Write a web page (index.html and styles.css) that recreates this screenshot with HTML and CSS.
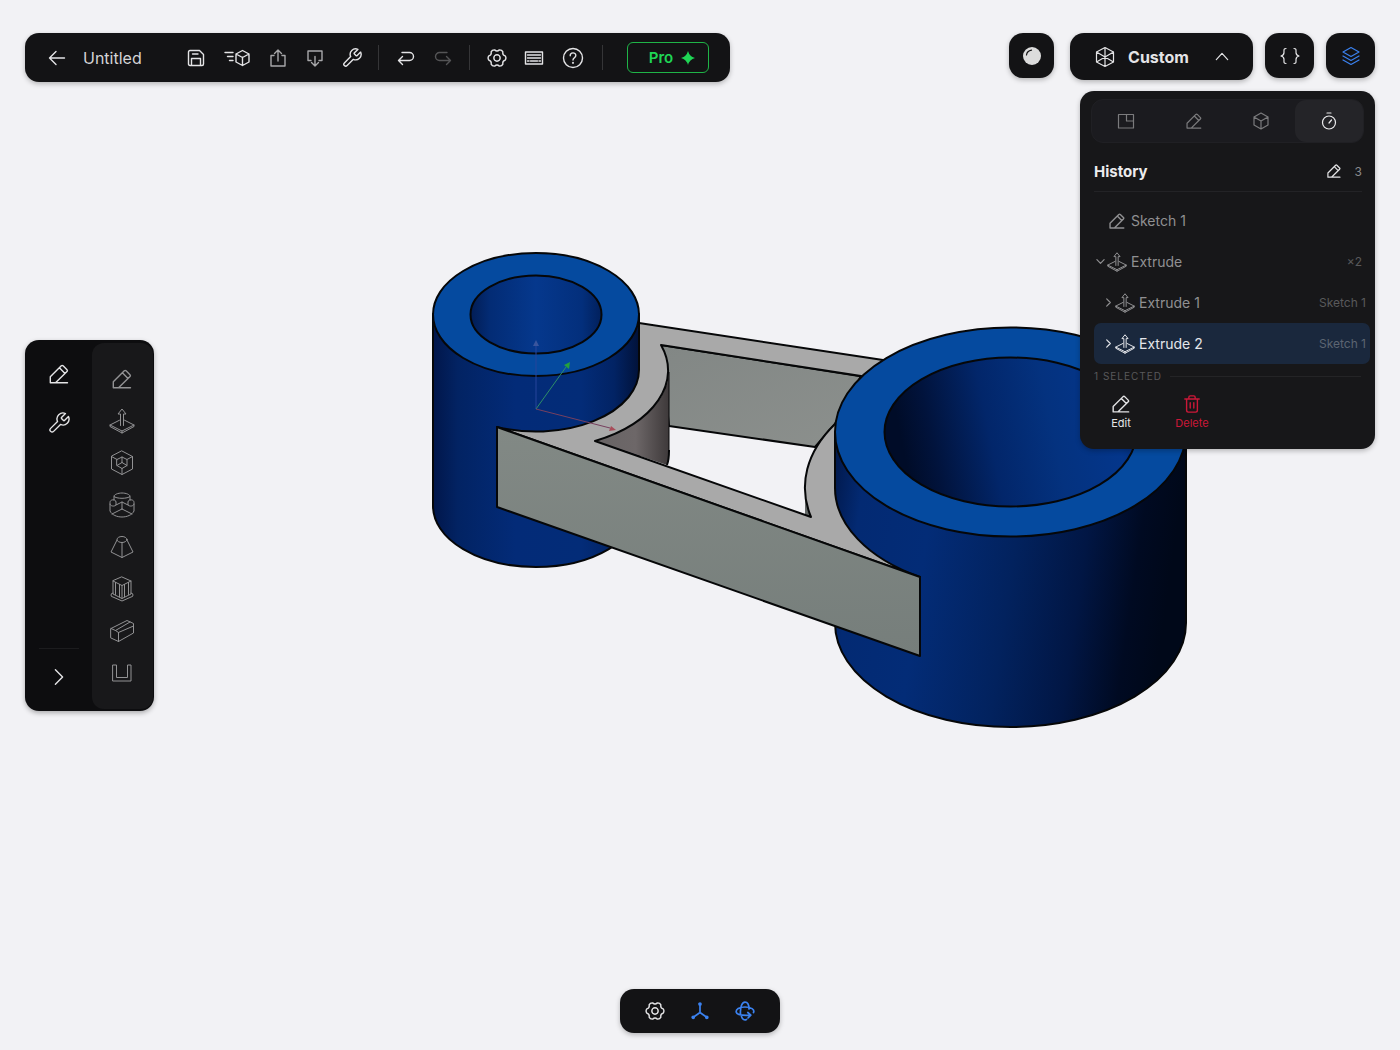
FILE: index.html
```html
<!DOCTYPE html>
<html lang="en">
<head>
<meta charset="utf-8">
<meta name="viewport" content="width=device-width, initial-scale=1">
<title>Untitled</title>
<link rel="stylesheet" href="styles.css">
</head>
<body>
<svg class="sprite" aria-hidden="true">
  <symbol id="i-back" viewBox="0 0 18 16"><path d="M16.500 8H1.500M8 1.500 1.500 8 8 14.500"/></symbol>
  <symbol id="i-save" viewBox="0 0 18 18"><path d="M1.500 3Q1.500 1.500 3 1.500H12.500L16.500 5.500V15Q16.500 16.500 15 16.500H3Q1.500 16.500 1.500 15ZM4.500 16V9.500H13.500V16M5.500 5H11"/></symbol>
  <symbol id="i-fast" viewBox="0 0 26 18"><path d="M18.500 1.500 25 5V13L18.500 16.500 12 13V5ZM12 5 18.500 8.500 25 5M18.500 8.500V16.500M1 3.500H9M3.500 7.500H9M5.500 11.500H9"/></symbol>
  <symbol id="i-share" viewBox="0 0 18 20"><path d="M5 7.500H2V18H16V7.500H13M9 13V2M5.500 5.500 9 2 12.500 5.500"/></symbol>
  <symbol id="i-import" viewBox="0 0 18 20"><path d="M5 12.500H2V3H16V12.500H13M9 8.500V18M5.500 14.500 9 18 12.500 14.500"/></symbol>
  <symbol id="i-wrench" viewBox="1 1 22 22"><path d="M14.700 6.300a1 1 0 0 0 0 1.400l1.600 1.600a1 1 0 0 0 1.400 0l3.770-3.770a6 6 0 0 1-7.940 7.940l-6.910 6.910a2.120 2.120 0 0 1-3-3l6.910-6.910a6 6 0 0 1 7.940-7.940l-3.760 3.760z"/></symbol>
  <symbol id="i-undo" viewBox="0 0 18 16"><path d="M5 2.500H12.500A4 4 0 0 1 12.500 10.500H1.500M5.500 6.500 1.500 10.500 5.500 14.500"/></symbol>
  <symbol id="i-redo" viewBox="0 0 18 16"><path d="M13 2.500H5.500A4 4 0 0 0 5.500 10.500H16.500M12.500 6.500 16.500 10.500 12.500 14.500"/></symbol>
  <symbol id="i-gear" viewBox="-11 -11 22 22"><path d="M9.020-2.250Q10.600 0 9.020 2.250Q5.720 3.300 6.460 6.690Q5.300 9.180 2.560 8.940Q0 6.600-2.560 8.940Q-5.300 9.180-6.460 6.690Q-5.720 3.300-9.020 2.250Q-10.600 0-9.020-2.250Q-5.720-3.300-6.460-6.690Q-5.300-9.180-2.560-8.940Q0-6.600 2.560-8.940Q5.300-9.180 6.460-6.690Q5.720-3.300 9.020-2.250Z"/><circle r="3.500"/></symbol>
  <symbol id="i-keyboard" viewBox="0 0 20 16"><path d="M1.500 2H18.500V14H1.500ZM3.500 5H16.500M3.500 8H16.500M3.500 11H5M6.500 11H13.500M15 11H16.500"/></symbol>
  <symbol id="i-help" viewBox="0 0 22 22"><circle cx="11" cy="11" r="9.500"/><path d="M8.200 8.700C8.200 5 13.800 5 13.800 8.500C13.800 10.800 11 10.600 11 13"/><circle cx="11" cy="15.800" r=".4"/></symbol>
  <symbol id="i-spark" viewBox="0 0 14 14"><path d="M7 0Q8.500 5.500 14 7Q8.500 8.500 7 14Q5.500 8.500 0 7Q5.500 5.500 7 0Z"/></symbol>
  <symbol id="i-ball" viewBox="0 0 20 20"><circle cx="10" cy="10" r="9" fill="#dcdcdc" stroke="none"/><path d="M4.500 9Q5 5 9.500 4.200" stroke="#151517"/></symbol>
  <symbol id="i-hex" viewBox="0 0 20 22"><path d="M10 1.500 18.500 6V16L10 20.500 1.500 16V6ZM10 1.500V20.500M1.500 6 18.500 16M18.500 6 1.500 16"/></symbol>
  <symbol id="i-up" viewBox="0 0 16 10"><path d="M1.500 8.500 8 1.500 14.500 8.500"/></symbol>
  <symbol id="i-braces" viewBox="0 0 20 18"><path d="M6 1.500C3.500 1.500 4 3 4 5.500S3 8.500 1 9C3 9.500 4 10 4 12.500S3.500 16.500 6 16.500M14 1.500C16.500 1.500 16 3 16 5.500S17 8.500 19 9C17 9.500 16 10 16 12.500S16.500 16.500 14 16.500"/></symbol>
  <symbol id="i-layers" viewBox="0 0 18 20"><path d="M9 1.500 17 6 9 10.500 1 6ZM1 10 9 14.500 17 10M1 14 9 18.500 17 14"/></symbol>
  <symbol id="i-board" viewBox="0 0 18 18"><path d="M1.500 2.500H16.500V16H1.500ZM9.500 2.500V9H16.500"/></symbol>
  <symbol id="i-pencil" viewBox="0 0 20 20"><path d="M18.500 18.800H1.300V12.800L12.300 1.800Q13.200 1 14.100 1.800L18 5.700Q18.900 6.600 18 7.500L6.800 18.600M10.400 3.800 16 9.400"/></symbol>
  <symbol id="i-cube" viewBox="0 0 16 18"><path d="M8 1 15 5V13L8 17 1 13V5ZM1 5 8 9 15 5M8 9V17"/></symbol>
  <symbol id="i-timer" viewBox="0 0 16 18"><circle cx="8" cy="10.500" r="6.500"/><path d="M8 11 10.500 8M6 1H10"/></symbol>
  <symbol id="i-down" viewBox="0 0 10 6"><path d="M1 1 5 5 9 1"/></symbol>
  <symbol id="i-right" viewBox="0 0 6 10"><path d="M1 1 5 5 1 9"/></symbol>
  <symbol id="i-trash" viewBox="0 0 18 20"><path d="M1 4.500H17M3 4.500V17Q3 19 5 19H13Q15 19 15 17V4.500M5.500 4.500V2.500Q5.500 1 7 1H11Q12.500 1 12.500 2.500V4.500M7 8.500V14.500M11 8.500V14.500"/></symbol>
  <symbol id="i-extrude" viewBox="0 0 26 26"><path d="M10.500 12.200 1 17V18.500L13 25 25 18.500V17L15.500 12.200M1 17 13 23 25 17M13 23V25M11.500 17.500V6H9L13 1 17 6H14.500V17.500"/></symbol>
  <symbol id="i-shell" viewBox="0 0 24 26"><path d="M12 1 22.500 6.500V19L12 24.500 1.500 19V6.500ZM1.500 6.500 7 9.500M22.500 6.500 17 9.500M12 24.500V18.500M7 9.500 12 7 17 9.500V15.500L12 18.500 7 15.500ZM12 7V12.500M12 12.500 7 15.500M12 12.500 17 15.500"/></symbol>
  <symbol id="i-sweep" viewBox="0 0 26 26"><path d="M5 8V4.500C5 2.500 9 1 13 1S21 2.500 21 4.500V8M5 4.500C7 7 19 7 21 4.500M1 10C1 7 7 7 7 10V13C5 15 1 14 1 12ZM25 10C25 7 19 7 19 10V13C21 15 25 14 25 12ZM1 12V19C3 23 8 25 13 25S23 23 25 19V12M7 13 13 10 19 13M13 10V17M13 17 3 22M13 17 23 22"/></symbol>
  <symbol id="i-loft" viewBox="0 0 24 24"><ellipse cx="12" cy="4.500" rx="5" ry="3"/><path d="M7 5 1 17 12 22.500 23 17 17 5M12 7.500V22.500"/></symbol>
  <symbol id="i-base" viewBox="0 0 24 26"><path d="M12 1 21 5V18L12 22.500 3 18V5ZM3 5 12 9.500 21 5M12 9.500V22.500M9.500 8.500V21M14.500 8.500V21M5.500 6.500V18.500M18.500 6.500V18.500M3 17Q1 17 1 19T3 21L12 25 21 21Q23 21 23 19T21 17"/></symbol>
  <symbol id="i-chamfer" viewBox="0 0 24 24"><path d="M1 9.500 17 1.500 23.500 4.500V14L8.500 22.500 1 19ZM1 9.500 5.500 11.500 8.500 13.500V22.500M5.500 11.500 20 3M8.500 13.500 23.500 7"/></symbol>
  <symbol id="i-channel" viewBox="0 0 20 18"><path d="M1 1H4.500V13.500H15.500V1H19V17H1Z"/></symbol>
  <symbol id="i-axes" viewBox="0 0 18 18"><path d="M9 2V10.500L2 15.500M9 10.500 16 15.500"/><g fill="currentColor"><circle cx="9" cy="2" r="1"/><circle cx="2.200" cy="15.300" r="1"/><circle cx="15.800" cy="15.300" r="1"/></g></symbol>
  <symbol id="i-orbit" viewBox="0 0 20 20"><path d="M18.500 11.500C20 8.500 16 6 10 6S.8 8.500 1.200 11C1.600 13.500 6 14.800 15.500 14.300M12.800 11.500 15.800 14.200 13 17M5.500 13C5 6 7 1.200 10 1.200C12.500 1.200 14 4 14 8M6.500 15.500C7.500 18.800 9.500 19.500 11.500 18.500"/></symbol>
</svg>

<svg class="scene" viewBox="0 0 1400 1050" preserveAspectRatio="xMidYMid slice" role="img" aria-label="Bracket with two cylinders">
  <defs>
    <linearGradient id="smallBody"><stop offset="0" stop-color="#01164a"/><stop offset=".12" stop-color="#022363"/><stop offset=".4" stop-color="#032b78"/><stop offset=".72" stop-color="#032c78"/><stop offset=".88" stop-color="#022364"/><stop offset="1" stop-color="#01123a"/></linearGradient>
    <linearGradient id="smallBore"><stop offset="0" stop-color="#021d55"/><stop offset=".15" stop-color="#032c75"/><stop offset=".5" stop-color="#05388d"/><stop offset=".85" stop-color="#032f7c"/><stop offset="1" stop-color="#02205c"/></linearGradient>
    <linearGradient id="bigBody" x2="1" y2=".12"><stop offset="0" stop-color="#011748"/><stop offset=".1" stop-color="#032a73"/><stop offset=".3" stop-color="#032c77"/><stop offset=".55" stop-color="#02225e"/><stop offset=".75" stop-color="#011644"/><stop offset=".9" stop-color="#000a22"/><stop offset="1" stop-color="#000819"/></linearGradient>
    <linearGradient id="bigBore" x2="1" y2="-.12"><stop offset="0" stop-color="#000c28"/><stop offset=".12" stop-color="#01133c"/><stop offset=".35" stop-color="#02266a"/><stop offset=".6" stop-color="#04327f"/><stop offset=".85" stop-color="#04368b"/><stop offset="1" stop-color="#032b74"/></linearGradient>
    <linearGradient id="fillet"><stop offset="0" stop-color="#686465"/><stop offset=".55" stop-color="#6d6768"/><stop offset="1" stop-color="#3e393a"/></linearGradient>
    <linearGradient id="front" x2="0" y2="1"><stop offset="0" stop-color="#828985"/><stop offset="1" stop-color="#767e7b"/></linearGradient>
    <linearGradient id="backWall" x2="1" y2="1"><stop offset="0" stop-color="#828785"/><stop offset="1" stop-color="#8c908d"/></linearGradient>
  </defs>
  <g stroke="#060708" stroke-width="2" stroke-linejoin="round">
    <path fill="url(#smallBody)" d="M433 314V506A103 61 0 0 0 639 506V314Z"/>
    <path fill="url(#bigBody)" d="M835 432V623A175.500 104 0 0 0 1186 623V432Z"/>
    <path fill="url(#backWall)" d="M661 345 872 378 835 424 815 447 669 426Z"/>
    <path fill="#626766" stroke="none" d="M805 487A205 122 0 0 0 811 517L805 515Z"/>
    <path fill="url(#fillet)" stroke="none" d="M669 372A133 79 0 0 1 595 441L667 465Q669 460 669 452Z"/>
    <path fill="none" d="M667 465Q669 460 669 450"/>
    <path fill="none" stroke-width="1" d="M669 372V452"/>
    <path fill="#a9a9a9" fill-rule="evenodd" d="M497 427A103 61.500 0 0 0 639 370V323L883 360 835 432V488A175.500 104 0 0 0 920 577ZM661 345A133 79 0 0 1 595 441L811 517A205.500 122 0 0 1 835 424L861 376Z"/>
    <path fill="url(#front)" d="M497 427 920 577V656L497 507Z"/>
    <ellipse fill="#054a9f" cx="536" cy="314.500" rx="103" ry="61.500"/>
    <ellipse fill="url(#smallBore)" cx="536" cy="314.500" rx="65.500" ry="39"/>
    <ellipse fill="#054a9f" cx="1010.500" cy="432" rx="175.500" ry="104.500"/>
    <ellipse fill="url(#bigBore)" cx="1010.500" cy="432" rx="126" ry="74.500"/>
  </g>
  <g fill="none">
    <path stroke="#27459a" d="M536 409V346"/><path fill="#3a559d" d="M533 346 536 340 539 346Z"/>
    <path stroke="#2d8d68" d="M536 409 566 367"/><path fill="#25a03c" d="M564 365 570 362 569 369Z"/>
    <path stroke="#77405f" d="M536 409 610 428"/><path fill="#a84d5a" d="M611 426 616 430 609 431Z"/>
  </g>
</svg>

<div class="app">
  <div class="top">
    <header class="toolbar surface">
      <button class="tool" aria-label="Back"><svg class="s18"><use href="#i-back"/></svg></button>
      <input class="title" type="text" value="Untitled" aria-label="Project name">
      <button class="tool" aria-label="Save"><svg class="s18"><use href="#i-save"/></svg></button>
      <button class="tool wide" aria-label="Quick render"><svg class="s26"><use href="#i-fast"/></svg></button>
      <button class="tool soft" aria-label="Export"><svg class="s20"><use href="#i-share"/></svg></button>
      <button class="tool soft" aria-label="Import"><svg class="s20"><use href="#i-import"/></svg></button>
      <button class="tool" aria-label="Tools"><svg class="s20"><use href="#i-wrench"/></svg></button>
      <span class="divider"></span>
      <button class="tool" aria-label="Undo"><svg class="s18"><use href="#i-undo"/></svg></button>
      <button class="tool" aria-label="Redo" disabled><svg class="s18"><use href="#i-redo"/></svg></button>
      <span class="divider"></span>
      <button class="tool" aria-label="Settings"><svg class="s20"><use href="#i-gear"/></svg></button>
      <button class="tool" aria-label="Shortcuts"><svg class="s20"><use href="#i-keyboard"/></svg></button>
      <button class="tool help" aria-label="Help"><svg class="s22"><use href="#i-help"/></svg></button>
      <span class="divider"></span>
      <button class="pro">Pro <svg><use href="#i-spark"/></svg></button>
    </header>

    <div class="side">
      <div class="views">
        <button class="view round surface" aria-label="Material"><svg class="s20"><use href="#i-ball"/></svg></button>
        <button class="mode surface" aria-expanded="true"><svg class="s22"><use href="#i-hex"/></svg>Custom<svg class="caret"><use href="#i-up"/></svg></button>
        <button class="view surface" aria-label="Variables"><svg class="s20"><use href="#i-braces"/></svg></button>
        <button class="view surface blue" aria-label="Layers"><svg class="s20"><use href="#i-layers"/></svg></button>
      </div>

      <section class="panel">
        <div class="tabs" role="tablist">
          <button role="tab" aria-label="Boards"><svg class="s18"><use href="#i-board"/></svg></button>
          <button role="tab" aria-label="Sketches"><svg class="s16"><use href="#i-pencil"/></svg></button>
          <button role="tab" aria-label="Bodies"><svg class="s18"><use href="#i-cube"/></svg></button>
          <button role="tab" aria-label="History" aria-selected="true"><svg class="s18"><use href="#i-timer"/></svg></button>
        </div>
        <div class="heading">
          <h2>History</h2>
          <button aria-label="Edit history"><svg class="s14"><use href="#i-pencil"/></svg></button>
          <span class="count">3</span>
        </div>
        <ul class="list">
          <li class="row"><span class="twist"></span><svg class="s16"><use href="#i-pencil"/></svg><span class="name">Sketch 1</span></li>
          <li class="row"><span class="twist"><svg><use href="#i-down"/></svg></span><svg class="s20 fine"><use href="#i-extrude"/></svg><span class="name">Extrude</span><small>×2</small></li>
          <li class="row child"><span class="twist"><svg><use href="#i-right"/></svg></span><svg class="s20 fine"><use href="#i-extrude"/></svg><span class="name">Extrude 1</span><small>Sketch 1</small></li>
          <li class="row child selected"><span class="twist"><svg><use href="#i-right"/></svg></span><svg class="s20 fine"><use href="#i-extrude"/></svg><span class="name">Extrude 2</span><small>Sketch 1</small></li>
        </ul>
        <div class="selection">1 SELECTED</div>
        <div class="actions">
          <button><svg class="s18"><use href="#i-pencil"/></svg>Edit</button>
          <button class="danger"><svg class="s18"><use href="#i-trash"/></svg>Delete</button>
        </div>
      </section>
    </div>
  </div>

  <nav class="palette" aria-label="Modeling tools">
    <div class="modes">
      <button aria-label="Sketch"><svg class="s20"><use href="#i-pencil"/></svg></button>
      <button aria-label="Modify"><svg class="s22"><use href="#i-wrench"/></svg></button>
      <button class="expand" aria-label="Expand"><svg class="s18"><use href="#i-right"/></svg></button>
    </div>
    <div class="ops">
      <button aria-label="Sketch"><svg class="s20"><use href="#i-pencil"/></svg></button>
      <button aria-label="Extrude"><svg class="s26"><use href="#i-extrude"/></svg></button>
      <button aria-label="Shell"><svg class="s26"><use href="#i-shell"/></svg></button>
      <button aria-label="Sweep"><svg class="s26"><use href="#i-sweep"/></svg></button>
      <button aria-label="Loft"><svg class="s24"><use href="#i-loft"/></svg></button>
      <button aria-label="Offset"><svg class="s26"><use href="#i-base"/></svg></button>
      <button aria-label="Fillet"><svg class="s24"><use href="#i-chamfer"/></svg></button>
      <button aria-label="Thicken"><svg class="s20"><use href="#i-channel"/></svg></button>
    </div>
  </nav>

  <footer class="dock surface">
    <button aria-label="View settings"><svg class="s20"><use href="#i-gear"/></svg></button>
    <button class="blue" aria-label="Axes"><svg class="s18"><use href="#i-axes"/></svg></button>
    <button class="blue" aria-label="Orbit"><svg class="s20"><use href="#i-orbit"/></svg></button>
  </footer>
</div>
</body>
</html>
```
FILE: styles.css
```css
* { box-sizing: border-box; }

body {
  margin: 0;
  background: #f2f2f5;
  color: #e4e4e6;
  font-family: Inter, "Liberation Sans", sans-serif;
  font-size: 14px;
}

button, input {
  margin: 0;
  padding: 0;
  border: 0;
  background: none;
  color: inherit;
  font: inherit;
}

button {
  display: flex;
  align-items: center;
  justify-content: center;
}

svg {
  flex: none;
  fill: none;
  stroke: currentColor;
  stroke-width: 1.4;
  stroke-linecap: round;
  stroke-linejoin: round;
}

symbol * { vector-effect: non-scaling-stroke; }

.sprite { position: absolute; width: 0; height: 0; }

.s14 { width: 14px; height: 14px; }
.s16 { width: 16px; height: 16px; }
.s18 { width: 18px; height: 18px; }
.s20 { width: 20px; height: 20px; }
.s22 { width: 22px; height: 22px; }
.s24 { width: 24px; height: 24px; }
.s26 { width: 26px; height: 26px; }
.fine { stroke-width: 1; }

.scene {
  position: absolute;
  inset: 0;
  width: 100%;
  height: 100%;
  stroke: none;
  stroke-width: 1;
  stroke-linecap: butt;
}

/* The floating bars share one cell above the canvas. */
.app {
  position: relative;
  display: grid;
  min-height: 100vh;
  padding: 0 25px;
}

.top, .palette, .dock { grid-area: 1 / 1; }

.surface {
  background: #131315;
  border-radius: 14px;
  box-shadow: 0 2px 5px rgba(0, 0, 0, .25);
}

.top {
  display: flex;
  align-items: flex-start;
  justify-content: space-between;
  padding-top: 33px;
}

.toolbar {
  display: flex;
  align-items: center;
  height: 49px;
  padding: 0 21px 0 13px;
}

.tool { width: 37px; height: 37px; }
.tool.wide { width: 45px; }
.tool.help { width: 42px; }
.tool.soft { color: #a8a8aa; }
.tool:disabled { color: #545456; }

.title {
  width: 94px;
  margin-left: 8px;
  font-size: 16px;
  color: #d4d4d6;
}

.divider {
  width: 1px;
  height: 25px;
  margin: 0 8px;
  background: #353537;
}

.pro {
  gap: 8px;
  width: 82px;
  height: 31px;
  margin-left: 16px;
  padding-left: 8px;
  border: 1px solid #1fb447;
  border-radius: 6px;
  color: #1fd655;
  font-size: 15px;
  font-weight: 600;
}

.pro svg { width: 14px; height: 14px; fill: currentColor; stroke: none; }

.side {
  display: flex;
  flex-direction: column;
  align-items: flex-end;
  gap: 11px;
}

.views { display: flex; align-items: flex-start; gap: 12px; }
.view { width: 49px; height: 45px; }
.view.round { width: 45px; margin-right: 4px; }
.blue { color: #3b82f0; }

.mode {
  gap: 12px;
  width: 183px;
  height: 47px;
  font-size: 16px;
  font-weight: 700;
}

.mode svg, .view svg { stroke-width: 1.2; }
.caret { width: 14px; height: 9px; margin-left: 14px; }

.panel {
  width: 295px;
  padding: 8px 5px 17px 11px;
  border-radius: 14px;
  background: #171719;
  box-shadow: 0 2px 5px rgba(0, 0, 0, .25);
}

.tabs {
  display: flex;
  height: 44px;
  margin-right: 6px;
  border: 1px solid #202024;
  border-radius: 12px;
  background: #1b1b1f;
  color: #7b7b7d;
}

.tabs button { flex: 1; border-radius: 11px; }
.tabs svg { stroke-width: 1.2; }
.tabs [aria-selected="true"] { background: #242428; color: #ececee; }

.heading {
  display: flex;
  align-items: center;
  gap: 14px;
  height: 49px;
  margin: 0 8px 8px 3px;
  padding-top: 8px;
  border-bottom: 1px solid #232326;
}

.heading svg { stroke-width: 1.2; }

h2 { flex: 1; margin: 0; font-size: 15px; font-weight: 700; color: #ececee; }
.count { color: #8a8a8c; font-size: 12px; }

.list { margin: 0; padding: 0 0 0 3px; list-style: none; color: #909092; }

.row {
  display: flex;
  align-items: center;
  height: 41px;
  padding-right: 4px;
  border-radius: 7px;
}

.row > svg { width: 20px; }
.name { flex: 1; padding-left: 4px; font-size: 14px; }
.twist { display: flex; justify-content: center; width: 13px; }
.twist svg { width: 9px; height: 9px; stroke-width: 1.2; }
.child { padding-left: 8px; }
.row small { color: #59595b; font-size: 12px; }
.row:not(.child) small { padding-right: 4px; }
.selected { background: #1a283d; color: #e4e6ea; }
.selected small { color: #5c6572; }

.selection {
  display: flex;
  align-items: center;
  gap: 8px;
  margin: 5px 9px 0 3px;
  color: #59595b;
  font-size: 10px;
  line-height: 14px;
  letter-spacing: 1px;
}

.selection::after { content: ""; flex: 1; height: 1px; background: #242426; }

.actions { display: flex; gap: 17px; padding-left: 3px; margin-top: 12px; }

.actions button {
  flex-direction: column;
  gap: 2px;
  width: 54px;
  font-size: 11px;
  line-height: 17px;
}

.danger { color: #cb1838; }

.palette {
  display: flex;
  align-self: center;
  justify-self: start;
  width: 129px;
  min-height: 371px;
  padding: 3px 1px 2px;
  border-radius: 14px;
  background: #0d0d0f;
  box-shadow: 0 2px 5px rgba(0, 0, 0, .3);
}

.modes {
  display: flex;
  flex-direction: column;
  align-items: center;
  width: 66px;
  padding: 7px 0 4px;
}

.modes button { width: 40px; height: 49px; }
.modes .expand { height: 57px; margin-top: auto; border-top: 1px solid #1c1c1e; }

.ops {
  display: flex;
  flex: 1;
  flex-direction: column;
  justify-content: space-between;
  padding: 16px 0;
  border-radius: 12px;
  background: #18181a;
  color: #929294;
}

.ops button { width: 59px; height: 40px; }
.ops svg { stroke-width: 1; }
.ops button:first-child svg { stroke-width: 1.4; }

.dock {
  display: flex;
  align-self: end;
  justify-self: center;
  gap: 5px;
  margin-bottom: 17px;
  padding: 0 15px;
}

.dock button { width: 40px; height: 44px; }
.dock .blue svg { stroke-width: 1.7; }
```
